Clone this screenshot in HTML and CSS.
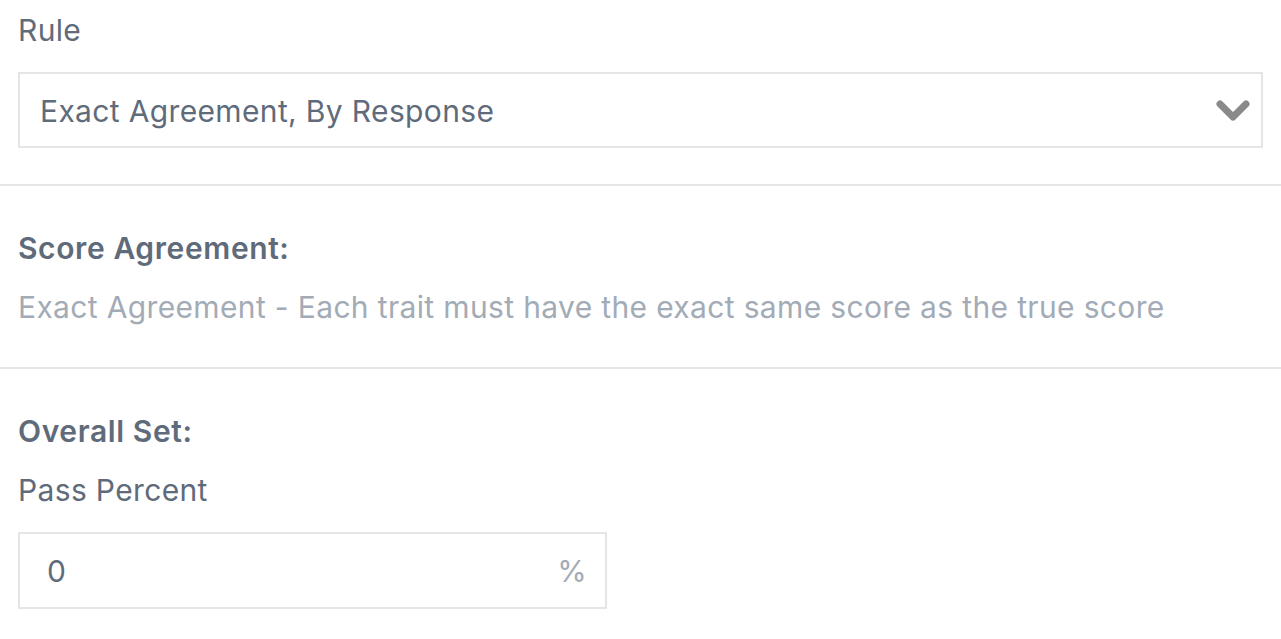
FILE: index.html
```html
<!DOCTYPE html>
<html>
<head>
<meta charset="utf-8">
<link rel="stylesheet" href="styles.css">
</head>
<body>
<div class="page">
  <section class="block block-rule">
    <div class="label">Rule</div>
    <div class="select">
      <span class="select-value">Exact Agreement, By Response</span>
      <svg class="chevron" width="34" height="24" viewBox="0 0 34 24"><path d="M4 5 L17 18 L30 5" fill="none" stroke="#8a8a8a" stroke-width="7" stroke-linecap="round" stroke-linejoin="round"/></svg>
    </div>
  </section>
  <hr class="divider">
  <section class="block block-score">
    <div class="title">Score Agreement:</div>
    <div class="desc">Exact Agreement - Each trait must have the exact same score as the true score</div>
  </section>
  <hr class="divider">
  <section class="block block-overall">
    <div class="title">Overall Set:</div>
    <div class="label label-pass">Pass Percent</div>
    <div class="input">
      <span class="input-value">0</span>
      <span class="input-suffix">%</span>
    </div>
  </section>
</div>
</body>
</html>
```

FILE: styles.css
```css
html, body {
  margin: 0;
  padding: 0;
  background: #ffffff;
}
body {
  font-family: Inter, "Noto Sans", "Liberation Sans", sans-serif;
  color: #5f6b7a;
  font-size: 30px;
  letter-spacing: 0.35px;
  line-height: 34px;
}
.page {
  width: 1281px;
}
.block {
  padding: 0 18px;
}
.block-rule {
  padding-top: 13px;
  padding-bottom: 36px;
}
.label {
  color: #5f6b7a;
}
.select {
  margin-top: 25px;
  height: 76px;
  box-sizing: border-box;
  border: 2px solid #e5e5e5;
  display: flex;
  align-items: center;
  justify-content: space-between;
  padding: 2px 11px 0 20px;
}
.chevron {
  display: block;
}
.divider {
  margin: 0;
  border: 0;
  height: 2px;
  background: #e6e6e6;
}
.block-score {
  padding-top: 45px;
  padding-bottom: 43px;
}
.title {
  font-weight: 600;
  letter-spacing: 0.6px;
}
.desc {
  margin-top: 25px;
  color: #a3abb6;
}
.block-overall {
  padding-top: 45px;
  padding-bottom: 30px;
}
.label-pass {
  margin-top: 25px;
}
.input {
  margin-top: 25px;
  width: 589px;
  height: 77px;
  box-sizing: border-box;
  border: 2px solid #e5e5e5;
  display: flex;
  align-items: center;
  justify-content: space-between;
  padding: 0 18px 0 27px;
}
.input-suffix {
  color: #a3abb6;
}
```
